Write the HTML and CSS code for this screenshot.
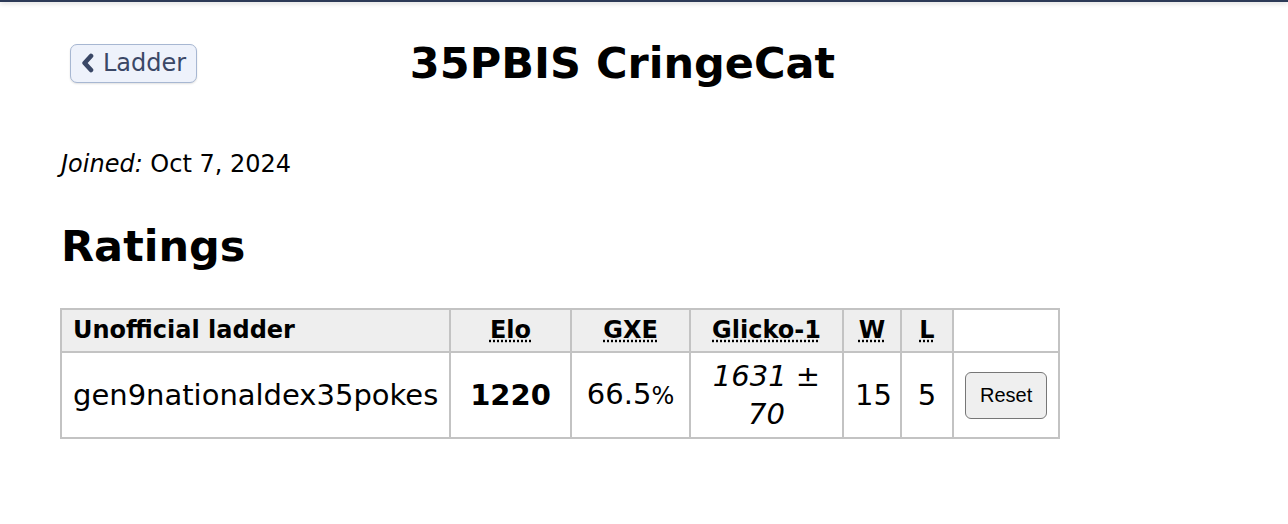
FILE: index.html
```html
<!DOCTYPE html>
<html lang="en">
<head>
  <meta charset="UTF-8" />
  <title>35PBIS CringeCat</title>
  <link rel="stylesheet" href="styles.css">
</head>
<body>
  <div class="topbar"></div>

  <div class="page">
    <div class="head">
      <div class="head-left">
        <a class="back-btn" href="#">
          <svg class="chevron" viewBox="0 0 13 20" width="13" height="20">
            <polyline points="10,3 3.6,10 10,17" fill="none" stroke="currentColor" stroke-width="4.6" stroke-linejoin="round" stroke-linecap="round"/>
          </svg>
          Ladder
        </a>
      </div>
      <h1 class="title">35PBIS CringeCat</h1>
      <div></div>
    </div>

    <p class="joined"><em>Joined:</em> Oct 7, 2024</p>

    <h2 class="section-title">Ratings</h2>

    <table class="ratings">
      <colgroup>
        <col class="c-format">
        <col class="c-elo">
        <col class="c-gxe">
        <col class="c-glicko">
        <col class="c-w">
        <col class="c-l">
        <col class="c-reset">
      </colgroup>
      <tr>
        <th class="left">Unofficial ladder</th>
        <th><abbr title="Elo rating">Elo</abbr></th>
        <th><abbr title="user's percentage chance of winning a random battle">GXE</abbr></th>
        <th><abbr title="Glicko-1 rating: rating ± deviation">Glicko-1</abbr></th>
        <th><abbr title="Wins">W</abbr></th>
        <th><abbr title="Losses">L</abbr></th>
        <th class="blank"></th>
      </tr>
      <tr>
        <td class="left">gen9nationaldex35pokes</td>
        <td><strong>1220</strong></td>
        <td>66.5<small>%</small></td>
        <td><em>1631 ± 70</em></td>
        <td>15</td>
        <td>5</td>
        <td><button class="reset-btn">Reset</button></td>
      </tr>
    </table>
  </div>
</body>
</html>
```

FILE: styles.css
```css
body {
  margin: 0;
  background: #ffffff;
  color: #000;
  font-family: "DejaVu Sans", Verdana, sans-serif;
  font-size: 24px;
}
.topbar {
  height: 2px;
  background: #2c3a57;
  box-shadow: 0 1px 5px rgba(0,0,0,0.25);
}
.page {
  padding: 0 104px 0 61px;
}
.head {
  display: grid;
  grid-template-columns: 1fr auto 1fr;
  align-items: center;
  margin-top: 36px;
}
.head-left {
  padding-left: 9px;
}
.back-btn {
  display: inline-flex;
  align-items: center;
  gap: 9px;
  height: 37px;
  padding: 0 10px 0 10px;
  border: 1px solid #a7b7d2;
  border-radius: 7px;
  background: #eef2fb;
  color: #3a4766;
  text-decoration: none;
  font-size: 24px;
  box-shadow: 0 1px 2px rgba(0,0,0,0.12);
}
.chevron { display: block; }
.title {
  margin: 0;
  font-size: 43px;
  font-weight: bold;
  text-align: center;
}
.joined {
  margin: 62px 0 0 0;
  line-height: 28px;
}
.section-title {
  margin: 43px 0 0 0;
  font-size: 43px;
  font-weight: bold;
}
.ratings {
  margin: 37px 0 0 -1px;
  border-collapse: collapse;
  table-layout: fixed;
  width: 1000px;
}
.c-format { width: 389px; }
.c-elo { width: 121px; }
.c-gxe { width: 119px; }
.c-glicko { width: 153px; }
.c-w { width: 58px; }
.c-l { width: 52px; }
.c-reset { width: 106px; }
.ratings th, .ratings td {
  border: 2px solid #c3c3c3;
  text-align: center;
}
.ratings th {
  background: #eeeeee;
  font-size: 24px;
  line-height: 29px;
  padding: 6px 4px;
}
.ratings th.blank { background: #fff; }
.ratings td {
  font-size: 29px;
  line-height: 38px;
  padding: 4px 11px;
}
.ratings .left {
  text-align: left;
  padding-left: 11px;
}
.ratings small { font-size: 24px; }
abbr[title] {
  text-decoration: underline dotted;
  text-underline-offset: 2px;
}
.reset-btn {
  font-family: "Liberation Sans", Arial, sans-serif;
  font-size: 20px;
  padding: 11px 14px;
  border: 1.5px solid #767676;
  border-radius: 6px;
  background: #efefef;
  color: #000;
}
```
